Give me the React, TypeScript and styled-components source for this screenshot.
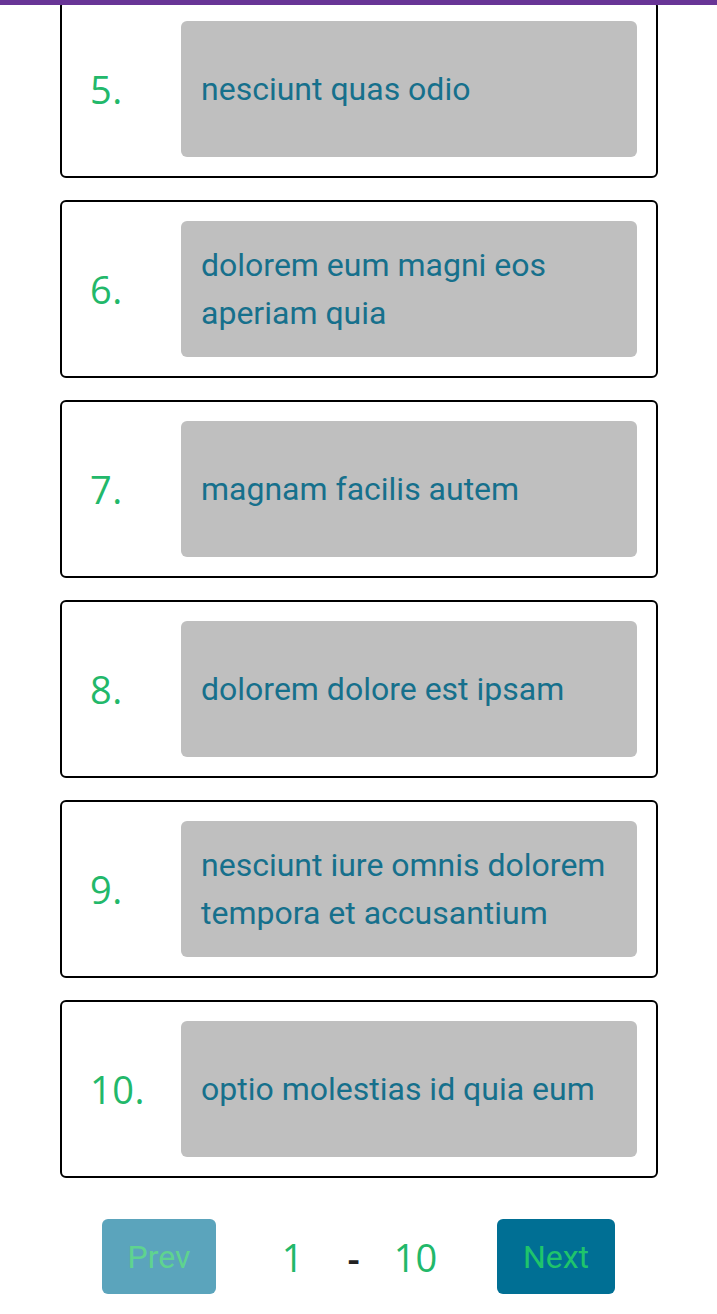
import React from "react";
import styled, { createGlobalStyle } from "styled-components";

const Global = createGlobalStyle`
  html, body { margin: 0; padding: 0; background: #ffffff; }
  body { font-family: Roboto, "Liberation Sans", sans-serif; }
`;

const TopBar = styled.div`
  position: fixed;
  top: 0;
  left: 0;
  right: 0;
  height: 5px;
  background: #683596;
  z-index: 10;
`;

const List = styled.ol`
  list-style: none;
  margin: 0;
  padding: 0 59px 0 60px;
  display: flex;
  flex-direction: column;
  gap: 22px;
`;

const Card = styled.li`
  box-sizing: border-box;
  height: 178px;
  border: 2px solid #000;
  border-radius: 6px;
  display: flex;
  align-items: center;
  padding: 0 19px 0 0;
`;

const Num = styled.span`
  flex: 0 0 119px;
  box-sizing: border-box;
  padding-left: 28px;
  font-family: "Open Sans", "Noto Sans", sans-serif;
  font-size: 38px;
  color: #22b86a;
  letter-spacing: 0.5px;
`;

const Body = styled.div`
  flex: 1;
  height: 136px;
  box-sizing: border-box;
  background: #bfbfbf;
  border-radius: 6px;
  display: flex;
  align-items: center;
  padding: 0 12px 0 20px;
  font-family: Roboto, sans-serif;
  font-size: 32px;
  line-height: 48px;
  color: #16708c;
`;

const Pager = styled.div`
  display: flex;
  align-items: center;
  justify-content: space-between;
  padding: 41px 102px 20px 102px;
`;

const PageButton = styled.button<{ $active?: boolean }>`
  height: 75px;
  width: ${(p) => (p.$active ? "118px" : "114px")};
  border: none;
  border-radius: 6px;
  background: ${(p) => (p.$active ? "#006f94" : "#5ba4bc")};
  color: ${(p) => (p.$active ? "#1fc46b" : "#5fd38f")};
  font-family: Roboto, sans-serif;
  font-size: 32px;
  padding: 0;
`;

const Range = styled.div`
  display: flex;
  align-items: center;
  font-family: "Open Sans", "Noto Sans", sans-serif;
  font-size: 38px;
  color: #22b86a;
  margin-left: 6px;
`;

const Dash = styled.span`
  color: #222;
  font-weight: 600;
  margin: 0 34px 0 44px;
`;

const items: [number, string][] = [
  [5, "nesciunt quas odio"],
  [6, "dolorem eum magni eos aperiam quia"],
  [7, "magnam facilis autem"],
  [8, "dolorem dolore est ipsam"],
  [9, "nesciunt iure omnis dolorem tempora et accusantium"],
  [10, "optio molestias id quia eum"],
];

export default function App() {
  return (
    <>
      <Global />
      <TopBar />
      <List>
        {items.map(([n, t]) => (
          <Card key={n}>
            <Num>{n}.</Num>
            <Body>{t}</Body>
          </Card>
        ))}
      </List>
      <Pager>
        <PageButton>Prev</PageButton>
        <Range>
          <span>1</span>
          <Dash>-</Dash>
          <span>10</span>
        </Range>
        <PageButton $active>Next</PageButton>
      </Pager>
    </>
  );
}
